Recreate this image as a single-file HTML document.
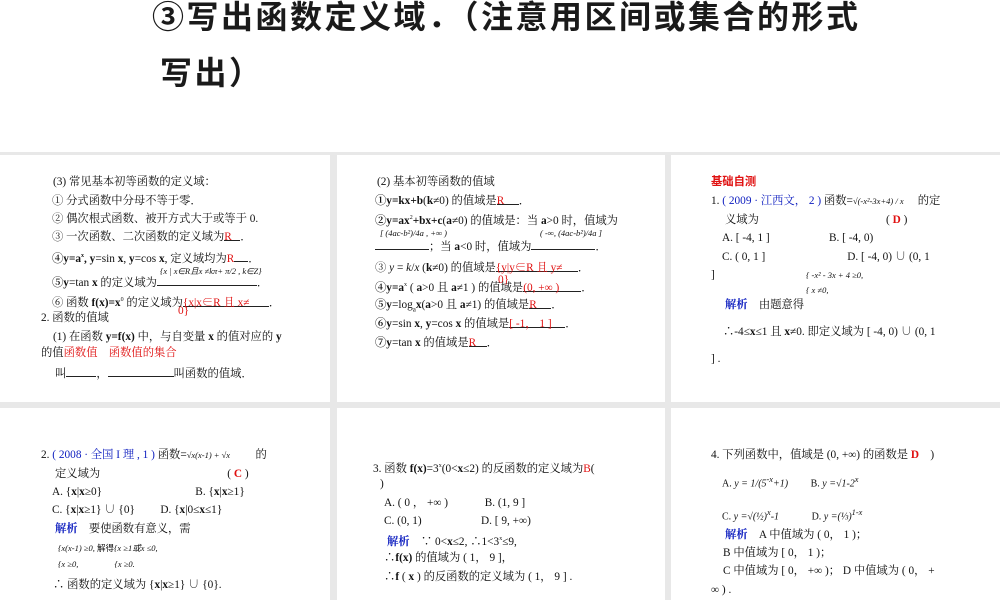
<!DOCTYPE html>
<html><head><meta charset="utf-8"><style>
*{margin:0;padding:0;box-sizing:border-box}
body{width:1000px;height:600px;background:#fff;position:relative;overflow:hidden;font-family:"Liberation Sans","Noto Sans CJK SC",sans-serif;color:#111}
.t{position:absolute;font-size:32px;line-height:36px;white-space:nowrap;letter-spacing:2.5px;font-weight:bold;font-family:"Liberation Sans","Noto Sans CJK SC",sans-serif;color:#1a1a1a}
.gray{position:absolute;left:0;top:152px;width:1000px;height:448px;background:#e8e8e8}
.p{position:absolute;background:#fff}
.l{position:absolute;font-size:11.3px;line-height:14px;white-space:nowrap;font-family:"Liberation Serif","Noto Serif CJK SC",serif}
.r{color:#e01010}
.b{color:#1020c0}
.u{display:inline-block;border-bottom:1px solid #222;height:11px;vertical-align:baseline;position:relative}
.s{font-size:8.5px;font-family:"Liberation Serif",serif;font-style:italic}
</style></head><body>
<div class="t" style="left:152px;top:-1px">③写出函数定义域．（注意用区间或集合的形式</div>
<div class="t" style="left:160px;top:55px">写出）</div>
<div class="gray"></div>
<div class="p" style="left:0;top:155px;width:330px;height:247px"></div>
<div class="p" style="left:337px;top:155px;width:328px;height:247px"></div>
<div class="p" style="left:671px;top:155px;width:329px;height:247px"></div>
<div class="p" style="left:0;top:408px;width:330px;height:192px"></div>
<div class="p" style="left:337px;top:408px;width:328px;height:192px"></div>
<div class="p" style="left:671px;top:408px;width:329px;height:192px"></div>

<!-- panel 1 -->
<div class="l" style="left:53px;top:175px">(3) 常见基本初等函数的定义域：</div>
<div class="l" style="left:52px;top:194px">① 分式函数中分母不等于零．</div>
<div class="l" style="left:52px;top:212px">② 偶次根式函数、被开方式大于或等于 0.</div>
<div class="l" style="left:52px;top:230px">③ 一次函数、二次函数的定义域为<span class="u r" style="width:16px">R</span>．</div>
<div class="l" style="left:52px;top:249px"><b>④y=a<sup style="font-size:6px">x</sup>, y</b>=sin <b>x</b>, <b>y</b>=cos <b>x</b>, 定义域均为<span class="r">R</span><span class="u" style="width:14px"></span>．</div>
<div class="l s" style="left:160px;top:264px">{x | x∈R且x ≠kπ+ π/2 , k∈Z}</div>
<div class="l" style="left:52px;top:275px"><b>⑤y</b>=tan <b>x</b> 的定义域为<span class="u" style="width:100px"></span>．</div>
<div class="l" style="left:52px;top:293px">⑥ 函数 <b>f(x)=x</b><sup style="font-size:6px">0</sup> 的定义域为<span class="u r" style="width:86px">{x|x∈R 且 x≠</span>．</div>
<div class="l r" style="left:178px;top:304px">0}</div>
<div class="l" style="left:41px;top:311px">2. 函数的值域</div>
<div class="l" style="left:53px;top:330px">(1) 在函数 <b>y=f(x)</b> 中，与自变量 <b>x</b> 的值对应的 <b>y</b></div>
<div class="l" style="left:41px;top:346px">的值<span class="r">函数值　函数值的集合</span></div>
<div class="l" style="left:55px;top:366px">叫<span class="u" style="width:30px"></span>，<span class="u" style="width:66px"></span>叫函数的值域．</div>

<!-- panel 2 -->
<div class="l" style="left:377px;top:175px">(2) 基本初等函数的值域</div>
<div class="l" style="left:375px;top:194px"><b>①y=kx+b</b>(<b>k</b>≠0) 的值域是<span class="u r" style="width:22px">R</span>．</div>
<div class="l" style="left:375px;top:211px"><b>②y=ax</b><sup style="font-size:6px">2</sup><b>+bx+c</b>(<b>a</b>≠0) 的值域是：当 <b>a</b>&gt;0 时，值域为</div>
<div class="l s" style="left:380px;top:226px">[ (4ac-b²)/4a , +∞ )</div>
<div class="l s" style="left:540px;top:226px">( -∞, (4ac-b²)/4a ]</div>
<div class="l" style="left:375px;top:239px"><span class="u" style="width:54px"></span>；当 <b>a</b>&lt;0 时，值域为<span class="u" style="width:64px"></span>．</div>
<div class="l" style="left:375px;top:261px">③ <i>y</i> = <i>k</i>/<i>x</i> (<b>k</b>≠0) 的值域是<span class="u r" style="width:82px">{y|y∈R 且 y≠</span>．</div>
<div class="l r" style="left:498px;top:273px">0}</div>
<div class="l" style="left:375px;top:278px"><b>④y=a</b><sup style="font-size:6px">x</sup> ( <b>a</b>&gt;0 且 <b>a</b>≠1 ) 的值域是<span class="u r" style="width:58px">(0, +∞ )</span>．</div>
<div class="l" style="left:375px;top:298px"><b>⑤y</b>=log<sub style="font-size:7px">a</sub><b>x</b>(<b>a</b>&gt;0 且 <b>a</b>≠1) 的值域是<span class="u r" style="width:22px">R</span>．</div>
<div class="l" style="left:375px;top:317px"><b>⑥y</b>=sin <b>x</b>, <b>y</b>=cos <b>x</b> 的值域是<span class="u r" style="width:56px">[ -1， 1 ]</span>．</div>
<div class="l" style="left:375px;top:336px"><b>⑦y</b>=tan <b>x</b> 的值域是<span class="u r" style="width:18px">R</span>．</div>

<!-- panel 3 -->
<div class="l r" style="left:711px;top:175px;font-weight:bold;font-family:'Liberation Sans','Noto Sans CJK SC',sans-serif">基础自测</div>
<div class="l" style="left:711px;top:194px">1. <span class="b">( 2009 · 江西文， 2 )</span> 函数=<span class="s">√(-x²-3x+4) / x</span>　 的定</div>
<div class="l" style="left:725px;top:213px">义域为　　　　　　　　　　　 ( <b class="r">D</b> )</div>
<div class="l" style="left:722px;top:231px">A. [ -4, 1 ]　　　　　 B. [ -4, 0)</div>
<div class="l" style="left:722px;top:250px">C. ( 0, 1 ]　　　　　　　 D. [ -4, 0) ∪ (0, 1</div>
<div class="l" style="left:711px;top:268px">]</div>
<div class="l s" style="left:806px;top:268px">{ -x² - 3x + 4 ≥0,</div>
<div class="l s" style="left:806px;top:283px">{ x ≠0,</div>
<div class="l" style="left:725px;top:298px"><b class="b">解析</b>　由题意得</div>
<div class="l" style="left:723px;top:325px">∴-4≤<b>x</b>≤1 且 <b>x</b>≠0. 即定义域为 [ -4, 0) ∪ (0, 1</div>
<div class="l" style="left:711px;top:352px">] .</div>

<!-- panel 4 -->
<div class="l" style="left:41px;top:448px">2. <span class="b">( 2008 · 全国 I 理 , 1 )</span> 函数=<span class="s">√x(x-1) + √x</span>　　 的</div>
<div class="l" style="left:55px;top:467px">定义域为　　　　　　　　　　　 ( <b class="r">C</b> )</div>
<div class="l" style="left:52px;top:485px">A. {<b>x</b>|<b>x</b>≥0}　　　　　　　　 B. {<b>x</b>|<b>x</b>≥1}</div>
<div class="l" style="left:52px;top:503px">C. {<b>x</b>|<b>x</b>≥1} ∪ {0}　　 D. {<b>x</b>|0≤<b>x</b>≤1}</div>
<div class="l" style="left:55px;top:522px"><b class="b">解析</b>　要使函数有意义，需</div>
<div class="l s" style="left:58px;top:541px">{x(x-1) ≥0, <span style="font-style:normal">解得</span>{x ≥1或x ≤0,</div>
<div class="l s" style="left:58px;top:557px">{x ≥0,　　　　 {x ≥0.</div>
<div class="l" style="left:53px;top:578px">∴ 函数的定义域为 {<b>x</b>|<b>x</b>≥1} ∪ {0}.</div>

<!-- panel 5 -->
<div class="l" style="left:373px;top:459px">3. 函数 <b>f(x)</b>=3<sup style="font-size:6px">x</sup>(0&lt;<b>x</b>≤2) 的反函数的定义域为<span class="r">B</span>(</div>
<div class="l" style="left:380px;top:477px">)</div>
<div class="l" style="left:384px;top:496px">A. ( 0 ， +∞ )　　　 B. (1, 9 ]</div>
<div class="l" style="left:384px;top:514px">C. (0, 1)　　　　　 D. [ 9, +∞)</div>
<div class="l" style="left:387px;top:532px"><b class="b">解析</b>　∵ 0&lt;<b>x</b>≤2, ∴1&lt;3<sup style="font-size:6px">x</sup>≤9,</div>
<div class="l" style="left:384px;top:551px">∴<b>f(x)</b> 的值域为 ( 1， 9 ]，</div>
<div class="l" style="left:384px;top:570px">∴<b>f</b> ( <b>x</b> ) 的反函数的定义域为 ( 1， 9 ] .</div>

<!-- panel 6 -->
<div class="l" style="left:711px;top:448px">4. 下列函数中，值域是 (0, +∞) 的函数是 <b class="r">D</b>　)</div>
<div class="l s" style="left:722px;top:473px;font-size:10px"><span style="font-style:normal">A.</span> y = 1/(5<sup>-x</sup>+1)　　 <span style="font-style:normal">B.</span> y =√1-2<sup>x</sup></div>
<div class="l s" style="left:722px;top:506px;font-size:10px"><span style="font-style:normal">C.</span> y =√(½)<sup>x</sup>-1　　　 <span style="font-style:normal">D.</span> y =(⅓)<sup>1-x</sup></div>
<div class="l" style="left:725px;top:528px"><b class="b">解析</b>　A 中值域为 ( 0， 1 )；</div>
<div class="l" style="left:723px;top:546px">B 中值域为 [ 0， 1 )；</div>
<div class="l" style="left:723px;top:564px">C 中值域为 [ 0， +∞ )； D 中值域为 ( 0， +</div>
<div class="l" style="left:711px;top:583px">∞ ) .</div>
</body></html>
